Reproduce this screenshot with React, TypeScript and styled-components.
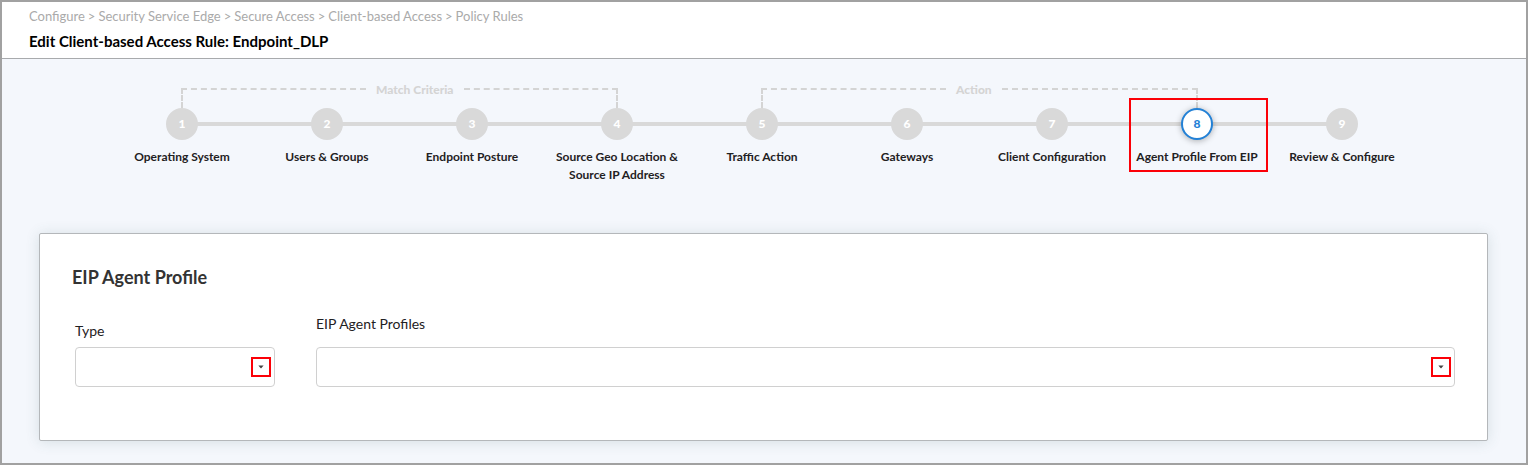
import React from "react";
import styled, { createGlobalStyle } from "styled-components";

const GlobalStyle = createGlobalStyle`
  *, *::before, *::after { box-sizing: border-box; }
  body {
    margin: 0;
    font-family: Lato, "Liberation Sans", sans-serif;
    color: #1f2123;
    background: #f4f7fc;
  }
`;

const Page = styled.div`
  min-height: 100vh;
  display: flex;
  flex-direction: column;
  border: 2px solid #a1a1a1;
  background: #f4f7fc;
`;

const Header = styled.header`
  display: flex;
  flex-direction: column;
  gap: 5px;
  padding: 4px 27px 7px;
  background: #fff;
  border-bottom: 1px solid #a8aaad;
`;

const Breadcrumb = styled.nav`
  display: flex;
  gap: 3px;
  font-size: 13px;
  line-height: 20px;
  color: #aaa;
`;

const Crumb = styled.a`
  color: inherit;
  text-decoration: none;
`;

const PageTitle = styled.h1`
  margin: 0;
  font-size: 15px;
  line-height: 20px;
  font-weight: 700;
  color: #000;
`;

const StepperArea = styled.section`
  display: flex;
  justify-content: center;
  padding: 21px 4px 0 0;
`;

const Stepper = styled.div`
  flex: 1;
  max-width: 1305px;
  display: grid;
  grid-template-columns: repeat(9, minmax(0, 1fr));
`;

const Bracket = styled.div`
  grid-column: span 4;
  display: flex;
  align-items: flex-end;
  height: 28px;
  margin: 0 calc(12.5% - 1px);
`;

const BracketLine = styled.div<{ $side: "left" | "right" }>`
  height: 20px;
  flex: ${(p) => (p.$side === "left" ? "0 1 185px" : "1")};
  border-top: 2px dashed #d4d4d4;
  border-${(p) => p.$side}: 2px dashed #d4d4d4;
`;

const BracketLabel = styled.span`
  align-self: flex-start;
  padding: 0 10px;
  font-size: 12px;
  line-height: 20px;
  font-weight: 900;
  white-space: nowrap;
  color: #d4d4d4;
`;

const Steps = styled.ol`
  grid-column: 1 / -1;
  display: grid;
  grid-template-columns: subgrid;
  margin: 0;
  padding: 0;
  list-style: none;
`;

const Step = styled.li`
  position: relative;
  display: flex;
  flex-direction: column;
  align-items: center;
  gap: 8px;

  &:not(:last-child)::before {
    content: "";
    position: absolute;
    top: 14px;
    left: 50%;
    width: 100%;
    height: 4px;
    background: #d9d9d9;
  }
`;

const StepDot = styled.button<{ $active: boolean }>`
  position: relative;
  z-index: 1;
  width: 32px;
  height: 32px;
  padding: 0;
  border-radius: 50%;
  border: 2px solid ${(p) => (p.$active ? "#2381d6" : "#d9d9d9")};
  background: ${(p) => (p.$active ? "#fff" : "#d9d9d9")};
  color: ${(p) => (p.$active ? "#2381d6" : "#fff")};
  box-shadow: ${(p) => (p.$active ? "0 1px 6px rgba(0, 0, 0, 0.3)" : "none")};
  font-family: inherit;
  font-size: 12px;
  line-height: 18px;
  font-weight: 900;
  cursor: pointer;
`;

const StepLabel = styled.span`
  font-size: 12px;
  line-height: 18px;
  font-weight: 700;
  text-align: center;
`;

const StepHighlight = styled.span`
  position: absolute;
  z-index: 2;
  top: -10px;
  left: 4px;
  right: 2px;
  height: 74px;
  border: 2px solid #fb0007;
  pointer-events: none;
`;

const Card = styled.main`
  margin: 49px 38px 22px 37px;
  padding: 30px 32px 53px;
  background: #fff;
  border: 1px solid #b4b7ba;
  border-radius: 2px;
  box-shadow: 0 1px 14px rgba(60, 100, 100, 0.16);
`;

const CardTitle = styled.h2`
  margin: 0;
  font-size: 18px;
  line-height: 26px;
  font-weight: 700;
  color: #333;
`;

const Fields = styled.div`
  display: flex;
  align-items: flex-end;
  gap: 41px;
  padding: 24px 0 0 3px;
`;

const Field = styled.div<{ $wide?: boolean }>`
  flex: ${(p) => (p.$wide ? "1" : "0 0 200px")};
  display: flex;
  flex-direction: column;
  gap: ${(p) => (p.$wide ? "13px" : "6px")};
`;

const FieldLabel = styled.label`
  font-size: 14px;
  line-height: 20px;
`;

const SelectBox = styled.div`
  position: relative;
`;

const Select = styled.select`
  display: block;
  width: 100%;
  height: 40px;
  padding: 0 32px 0 12px;
  appearance: none;
  border: 1px solid #d0d0d0;
  border-radius: 4px;
  background: #fff;
  font: inherit;
  font-size: 14px;
`;

const CaretMark = styled.span`
  position: absolute;
  top: 0;
  bottom: 0;
  right: 4px;
  width: 20px;
  height: 20px;
  margin: auto 0;
  display: flex;
  align-items: center;
  justify-content: center;
  border: 2px solid #fb0007;
  pointer-events: none;
`;

const crumbs = ["Configure", "Security Service Edge", "Secure Access", "Client-based Access", "Policy Rules"];

const steps = [
  "Operating System",
  "Users & Groups",
  "Endpoint Posture",
  "Source Geo Location & Source IP Address",
  "Traffic Action",
  "Gateways",
  "Client Configuration",
  "Agent Profile From EIP",
  "Review & Configure",
];

const ACTIVE_STEP = 8;

function StepGroup({ label }: { label: string }) {
  return (
    <Bracket>
      <BracketLine $side="left" />
      <BracketLabel>{label}</BracketLabel>
      <BracketLine $side="right" />
    </Bracket>
  );
}

function SelectField({ id, label, wide }: { id: string; label: string; wide?: boolean }) {
  return (
    <Field $wide={wide}>
      <FieldLabel htmlFor={id}>{label}</FieldLabel>
      <SelectBox>
        <Select id={id} defaultValue="">
          <option value="" />
        </Select>
        <CaretMark>
          <svg width="6" height="4" viewBox="0 0 6 4" aria-hidden="true">
            <path d="M0.4 0.4h5.2L3.5 2.9a.7.7 0 0 1-1 0z" fill="#444" />
          </svg>
        </CaretMark>
      </SelectBox>
    </Field>
  );
}

export default function App() {
  return (
    <>
      <GlobalStyle />
      <Page>
        <Header>
          <Breadcrumb aria-label="Breadcrumb">
            {crumbs.map((crumb, i) => (
              <React.Fragment key={crumb}>
                {i > 0 && <span>&gt;</span>}
                <Crumb href="#">{crumb}</Crumb>
              </React.Fragment>
            ))}
          </Breadcrumb>
          <PageTitle>Edit Client-based Access Rule: Endpoint_DLP</PageTitle>
        </Header>
        <StepperArea>
          <Stepper>
            <StepGroup label="Match Criteria" />
            <StepGroup label="Action" />
            <Steps>
              {steps.map((label, i) => {
                const active = i + 1 === ACTIVE_STEP;
                return (
                  <Step key={label} aria-current={active ? "step" : undefined}>
                    <StepDot type="button" $active={active} aria-label={label}>
                      {i + 1}
                    </StepDot>
                    <StepLabel>{label}</StepLabel>
                    {active && <StepHighlight />}
                  </Step>
                );
              })}
            </Steps>
          </Stepper>
        </StepperArea>
        <Card>
          <CardTitle>EIP Agent Profile</CardTitle>
          <Fields>
            <SelectField id="type" label="Type" />
            <SelectField id="profiles" label="EIP Agent Profiles" wide />
          </Fields>
        </Card>
      </Page>
    </>
  );
}
